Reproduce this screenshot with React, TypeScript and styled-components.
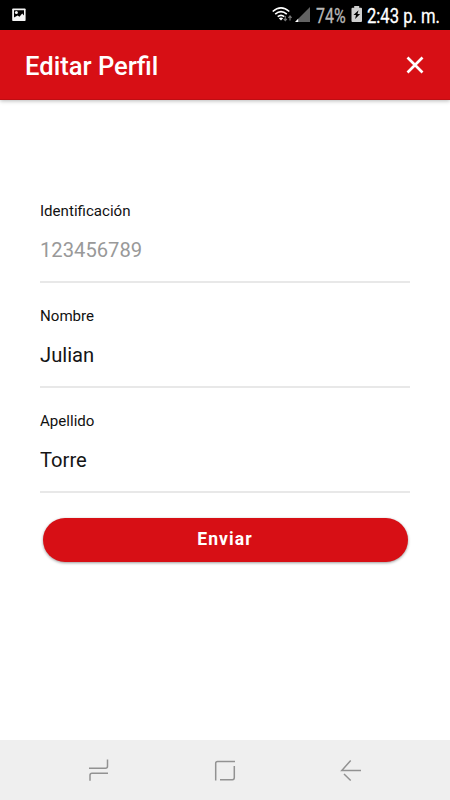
import React from 'react';
import styled, { createGlobalStyle } from 'styled-components';

const GlobalStyle = createGlobalStyle`
  * { box-sizing: border-box; }
  body { margin: 0; background: #fff; font-family: Roboto, "Liberation Sans", sans-serif; }
  svg { display: block; flex: none; }
`;

const Screen = styled.main`
  width: 450px;
  height: 800px;
  display: flex;
  flex-direction: column;
  overflow: hidden;
  background: #fff;
`;

const StatusBar = styled.div`
  flex: none;
  height: 30px;
  display: flex;
  align-items: center;
  justify-content: space-between;
  padding: 0 0 0 12px;
  background: #000;
`;

const StatusGroup = styled.div`
  display: flex;
  align-items: center;
  height: 30px;
  width: 178px;
`;

const StatusText = styled.span<{ $color: string; $width: number; $squeeze: number }>`
  flex: none;
  width: ${(p) => p.$width}px;
  padding-top: 2px;
  font-size: 20px;
  line-height: 28px;
  white-space: nowrap;
  color: ${(p) => p.$color};
  -webkit-text-stroke: 0.3px ${(p) => p.$color};
  transform: scaleX(${(p) => p.$squeeze});
  transform-origin: left center;
`;

const Header = styled.header`
  flex: none;
  height: 70px;
  display: flex;
  align-items: center;
  justify-content: space-between;
  padding: 0 26px 0 25px;
  background: #d70f15;
  border-bottom: 1px solid #bf0d12;
  box-shadow: 0 1px 4px rgba(0, 0, 0, 0.28);
`;

const Title = styled.h1`
  margin: 0;
  padding-top: 2px;
  font-size: 25.6px;
  line-height: 30px;
  font-weight: 500;
  color: #fff;
`;

const IconButton = styled.button`
  padding: 0;
  border: 0;
  background: none;
`;

const Form = styled.form`
  flex: 1;
  padding: 98px 40px 0;
`;

const Field = styled.label`
  display: block;
  height: 85px;
  margin-bottom: 20px;
  border-bottom: 2px solid #e8e8e8;
`;

const Label = styled.span`
  display: block;
  padding-top: 3px;
  font-size: 15.1px;
  line-height: 20px;
  color: #111;
`;

const Input = styled.input`
  display: block;
  width: 100%;
  height: 30px;
  margin-top: 14px;
  padding: 0;
  border: 0;
  outline: 0;
  background: none;
  font-family: inherit;
  font-size: 20.2px;
  color: #151515;
  &:disabled { color: #999; }
`;

const Submit = styled.button`
  display: block;
  width: 365px;
  height: 44px;
  margin: 25px 0 0 2.5px;
  padding: 0 0 2px;
  border: 0;
  border-radius: 22px;
  background: #d70f15;
  box-shadow: 0 1px 3px rgba(0, 0, 0, 0.4);
  font-family: inherit;
  font-size: 17.5px;
  font-weight: 700;
  letter-spacing: 1.1px;
  color: #fff;
`;

const NavBar = styled.nav`
  flex: none;
  height: 60px;
  display: flex;
  align-items: center;
  justify-content: space-between;
  padding: 0 87px 2px;
  background: #efefef;
`;

const fields = [
  { label: 'Identificación', value: '123456789', disabled: true },
  { label: 'Nombre', value: 'Julian', disabled: false },
  { label: 'Apellido', value: 'Torre', disabled: false },
];

const PictureIcon = () => (
  <svg width="14" height="14" viewBox="0 0 14 14">
    <rect x="0.2" y="0.5" width="13.4" height="12.6" rx="0.8" fill="#f4f4f4" />
    <path d="M2 2.2h10v5.3L10.2 5.5 7.5 8.8 5.6 7.4 2 9.4z" fill="#000" />
    <circle cx="4.4" cy="4.6" r="1.5" fill="#f4f4f4" />
  </svg>
);

const WifiIcon = () => (
  <svg width="22" height="30" viewBox="0 0 22 30">
    <g fill="none" stroke="#fff" strokeWidth="1.6">
      <path d="M0.7 11.5Q9 4.2 17.3 11.5" />
      <path d="M3.2 14.1Q9 9 14.8 14.1" />
      <path d="M5.7 16.7Q9 14 12.3 16.7" />
    </g>
    <path d="M6.8 18.2Q9 16.7 11.2 18.2L9 20.5z" fill="#fff" />
    <path d="M13.3 16v4.5M11.7 18.8l1.6 1.8 1.6-1.8M18 20.5v-4.5M16.4 17.8l1.6-1.8 1.6 1.8" fill="none" stroke="#777" strokeWidth="1.2" />
  </svg>
);

const SignalIcon = () => (
  <svg width="22" height="30" viewBox="0 0 22 30">
    <path d="M16 7v15H5V18z" fill="#626262" />
    <path d="M4.5 18.3V22H1z" fill="#fff" />
  </svg>
);

const BatteryIcon = () => (
  <svg width="16" height="30" viewBox="0 0 16 30">
    <path d="M3.2 6h5v1.8H10q1 0 1 1V21q0 1-1 1H1.5q-1 0-1-1V8.8q0-1 1-1h1.7z" fill="#cfcfcf" />
    <path d="M7.5 10.2 2.5 15h2.5l-.9 4 5-5H6.5z" fill="#000" />
  </svg>
);

const CloseIcon = () => (
  <svg width="18" height="18" viewBox="0 0 18 18">
    <path d="M1.5 1.5 16.5 16.5M16.5 1.5 1.5 16.5" stroke="#fff" strokeWidth="2.7" />
  </svg>
);

const NavIcon = ({ d }: { d: string }) => (
  <svg width="24" height="24" viewBox="0 0 24 24">
    <path d={d} fill="none" stroke="#929292" strokeWidth="1.5" />
  </svg>
);

export default function App() {
  return (
    <Screen>
      <GlobalStyle />
      <StatusBar>
        <PictureIcon />
        <StatusGroup>
          <WifiIcon />
          <SignalIcon />
          <StatusText $color="#b8b8b8" $width={35} $squeeze={0.8}>74%</StatusText>
          <BatteryIcon />
          <StatusText $color="#fff" $width={83} $squeeze={0.83}>2:43 p. m.</StatusText>
        </StatusGroup>
      </StatusBar>
      <Header>
        <Title>Editar Perfil</Title>
        <IconButton type="button" aria-label="Cerrar"><CloseIcon /></IconButton>
      </Header>
      <Form>
        {fields.map((f) => (
          <Field key={f.label}>
            <Label>{f.label}</Label>
            <Input defaultValue={f.value} disabled={f.disabled} />
          </Field>
        ))}
        <Submit type="button">Enviar</Submit>
      </Form>
      <NavBar>
        <NavIcon d="M2 11.3H18.5Q20.5 11.3 20.5 9.3V2.5M21 16.3H5Q3 16.3 3 18.3V23.8" />
        <NavIcon d="M22 4.5H4.5Q2.7 4.5 2.7 6.3V23.5M21.3 9V20.5Q21.3 22.7 19.5 22.7H7" />
        <NavIcon d="M22 13.5H2.8L11.7 3.5M5 17 11.7 23.5" />
      </NavBar>
    </Screen>
  );
}
